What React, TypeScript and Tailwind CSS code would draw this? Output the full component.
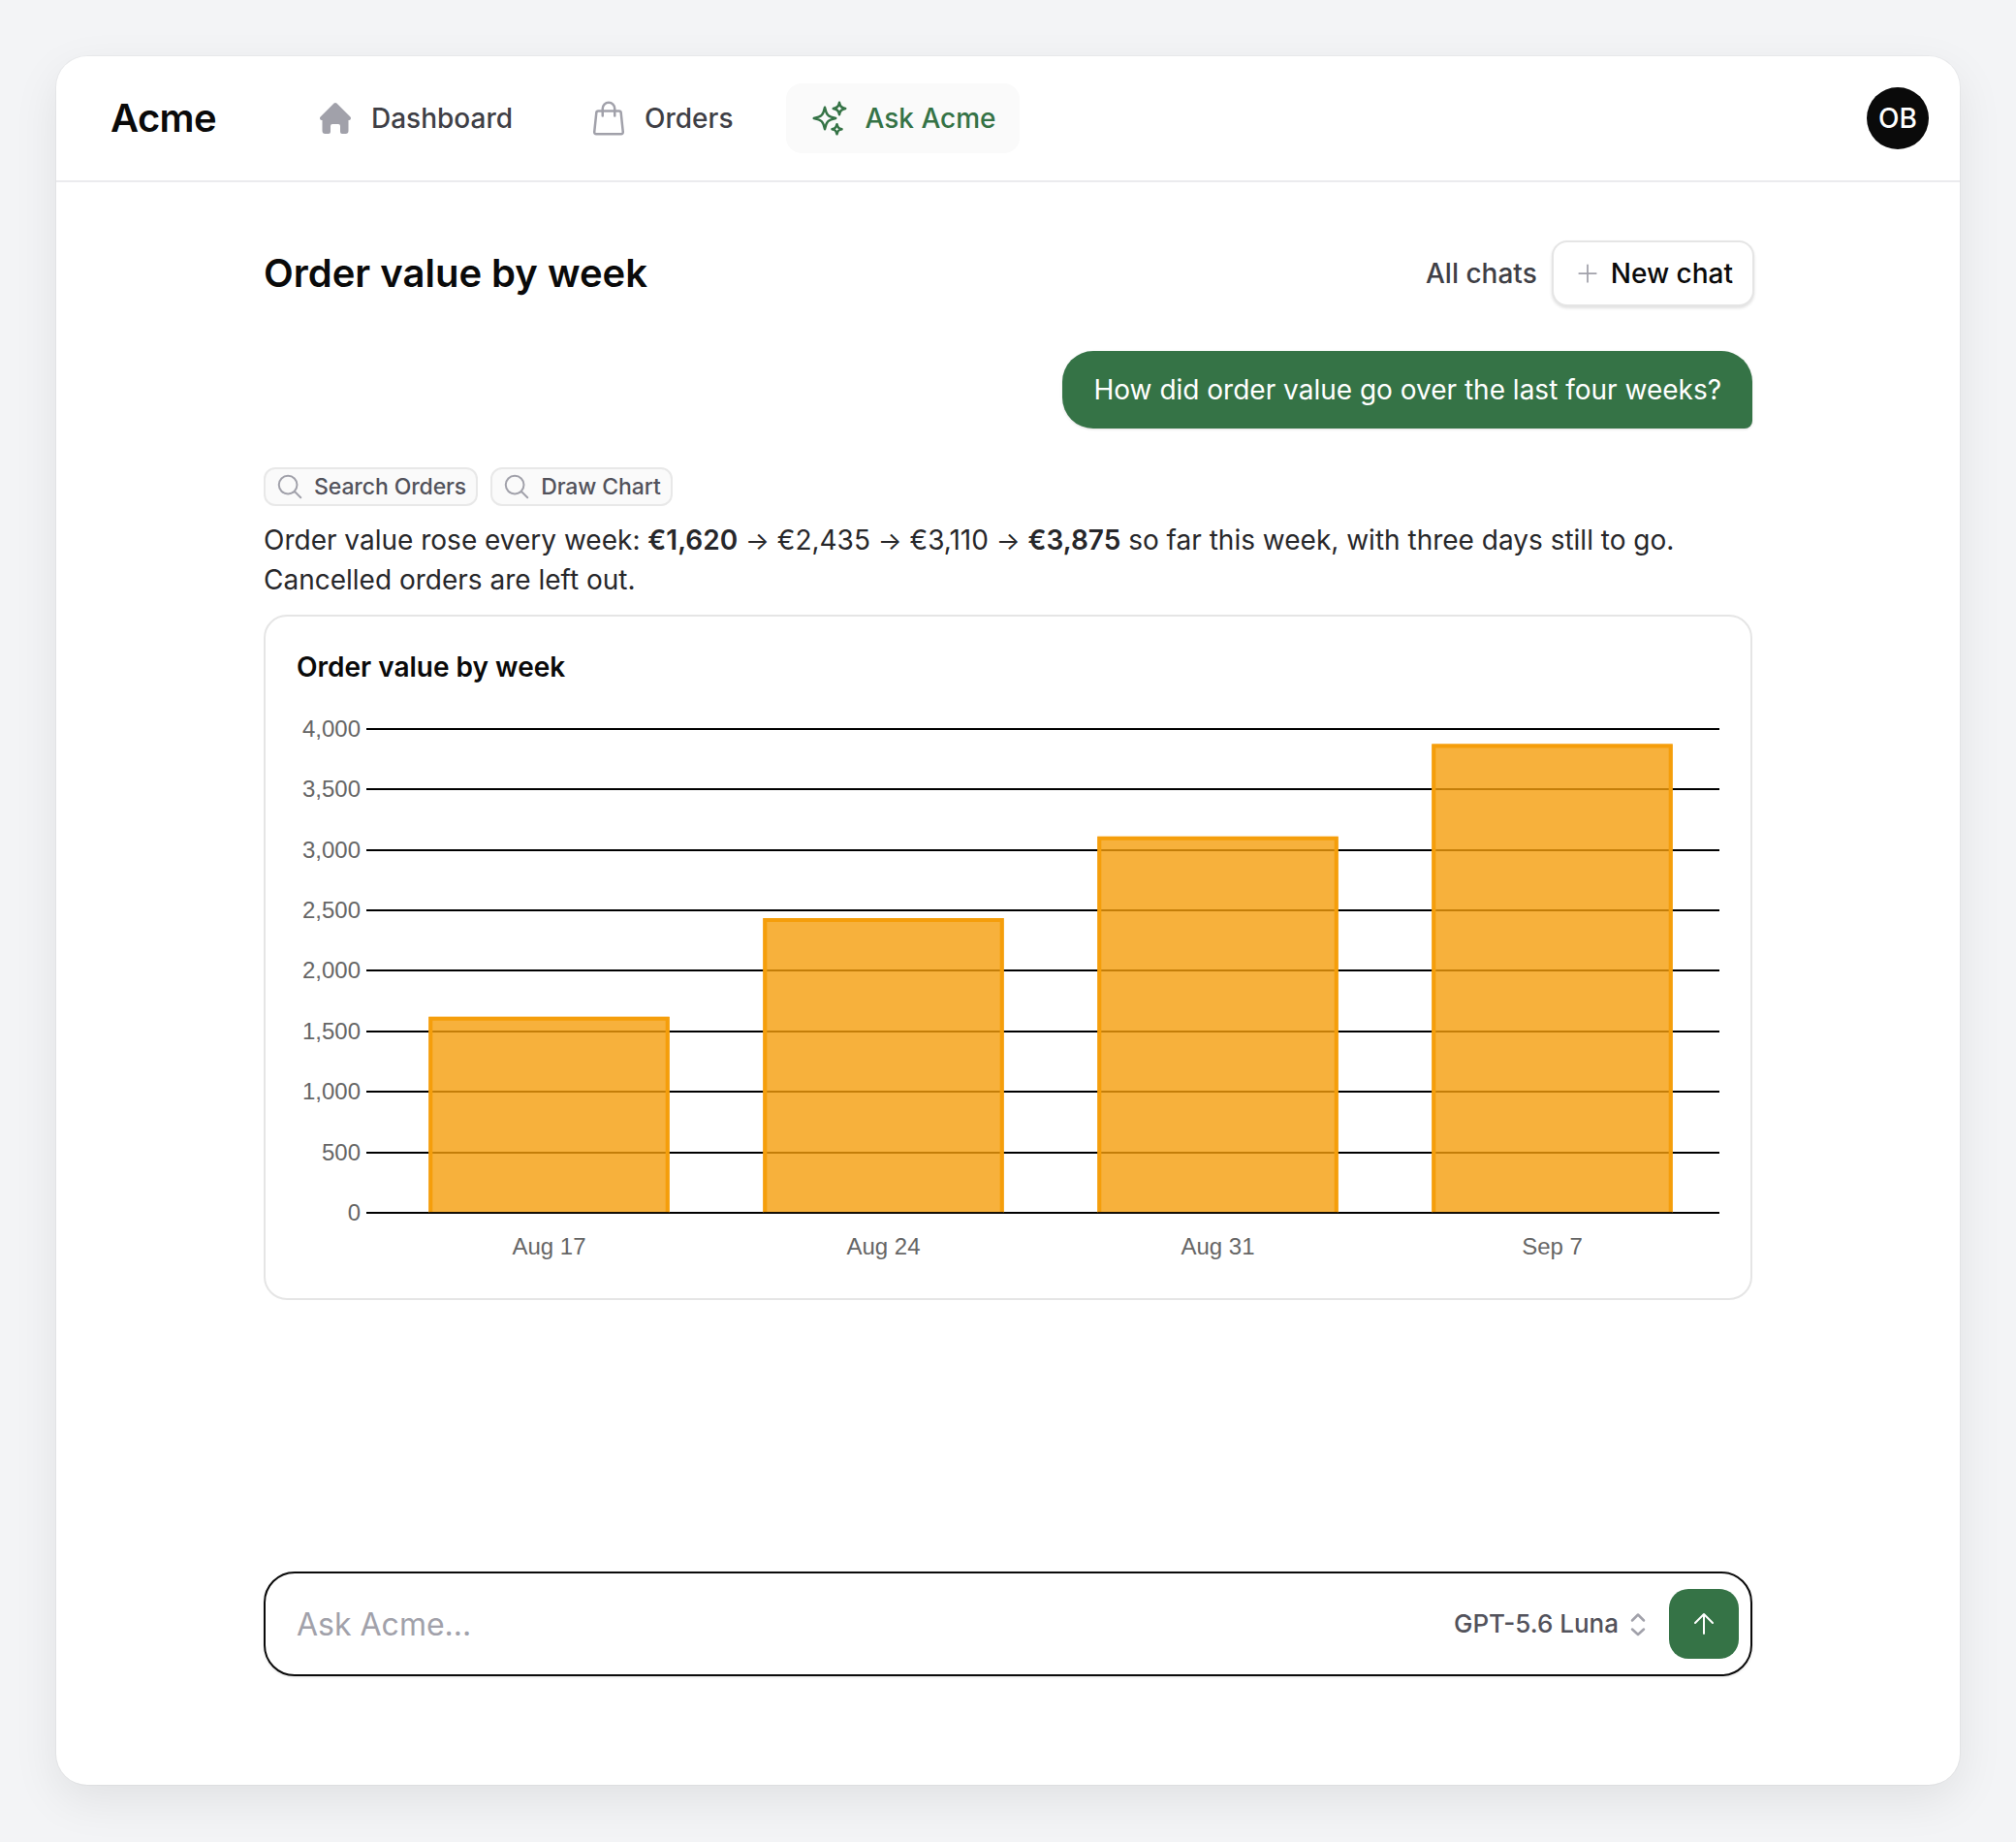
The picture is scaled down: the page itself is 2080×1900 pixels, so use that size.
import React from "react";

const GREEN = "#357346";

function HomeIcon() {
  return (
    <svg width="40" height="40" viewBox="0 0 20 20" fill="#a1a1aa" className="shrink-0">
      <path fillRule="evenodd" clipRule="evenodd" d="M9.293 2.293a1 1 0 0 1 1.414 0l7 7A1 1 0 0 1 17 11h-.25v5.5a1.5 1.5 0 0 1-1.5 1.5H13.5a1 1 0 0 1-1-1v-3a1 1 0 0 0-1-1h-3a1 1 0 0 0-1 1v3a1 1 0 0 1-1 1H4.75a1.5 1.5 0 0 1-1.5-1.5V11H3a1 1 0 0 1-.707-1.707l7-7Z" />
    </svg>
  );
}

function BagIcon() {
  return (
    <svg width="40" height="40" viewBox="0 0 24 24" fill="none" stroke="#a1a1aa" strokeWidth="1.5" strokeLinecap="round" strokeLinejoin="round" className="shrink-0">
      <path d="M15.75 10.5V6a3.75 3.75 0 1 0-7.5 0v4.5m11.356-1.993 1.263 12c.07.665-.45 1.243-1.119 1.243H4.25a1.125 1.125 0 0 1-1.12-1.243l1.264-12A1.125 1.125 0 0 1 5.513 7.5h12.974c.576 0 1.059.435 1.119 1.007Z" />
    </svg>
  );
}

function SparkIcon() {
  return (
    <svg width="40" height="40" viewBox="0 0 24 24" fill="none" stroke={GREEN} strokeWidth="1.5" strokeLinecap="round" strokeLinejoin="round" className="shrink-0">
      <path d="M9.813 15.904 9 18.75l-.813-2.846a4.5 4.5 0 0 0-3.09-3.09L2.25 12l2.846-.813a4.5 4.5 0 0 0 3.09-3.09L9 5.25l.813 2.846a4.5 4.5 0 0 0 3.09 3.09L15.75 12l-2.846.813a4.5 4.5 0 0 0-3.09 3.09ZM18.259 8.715 18 9.75l-.259-1.035a3.375 3.375 0 0 0-2.455-2.456L14.25 6l1.036-.259a3.375 3.375 0 0 0 2.455-2.456L18 2.25l.259 1.035a3.375 3.375 0 0 0 2.456 2.456L21.75 6l-1.035.259a3.375 3.375 0 0 0-2.456 2.456ZM16.894 20.567 16.5 21.75l-.394-1.183a2.25 2.25 0 0 0-1.423-1.423L13.5 18.75l1.183-.394a2.25 2.25 0 0 0 1.423-1.423l.394-1.183.394 1.183a2.25 2.25 0 0 0 1.423 1.423l1.183.394-1.183.394a2.25 2.25 0 0 0-1.423 1.423Z" />
    </svg>
  );
}

function SearchIcon() {
  return (
    <svg width="30" height="30" viewBox="0 0 24 24" fill="none" stroke="#a1a1aa" strokeWidth="1.6" strokeLinecap="round" strokeLinejoin="round" className="shrink-0">
      <path d="m21 21-5.197-5.197m0 0A7.5 7.5 0 1 0 5.196 5.196a7.5 7.5 0 0 0 10.607 10.607Z" />
    </svg>
  );
}

function Tag({ label }: { label: string }) {
  return (
    <div className="flex h-[40px] items-center gap-[10px] rounded-[12px] border-2 border-[#e8e8e8] bg-[#fafafa] pl-[10px] pr-[10px] text-[23px] leading-[32px] font-medium tracking-[-0.1px] text-[#52525b]">
      <SearchIcon />
      <span>{label}</span>
    </div>
  );
}

const vals = [
  { label: "Aug 17", v: 1620 },
  { label: "Aug 24", v: 2435 },
  { label: "Aug 31", v: 3110 },
  { label: "Sep 7", v: 3875 },
];
const ticks = [0, 500, 1000, 1500, 2000, 2500, 3000, 3500, 4000];

function Chart() {
  const left = 88;
  const right = 1468;
  const y0 = 520;
  const unit = 499.2 / 4000;
  return (
    <svg width="1484" height="580" viewBox="0 0 1484 580" className="block" style={{ fontFamily: '"Liberation Sans", Arial, sans-serif' }}>
      {ticks.map((t) => {
        const y = Math.round(y0 - t * unit);
        return (
          <g key={t}>
            <line x1={left - 16} x2={right} y1={y} y2={y} stroke="#000" strokeWidth="2" />
            <text x={left - 22} y={y + 7.5} textAnchor="end" fontSize="24" fill="#666">
              {t.toLocaleString("en-US")}
            </text>
          </g>
        );
      })}
      {vals.map((d, i) => {
        const w = 248.4;
        const cx = left + 172.5 + i * 345;
        const h = d.v * unit;
        const x = cx - w / 2;
        const top = y0 - h;
        return (
          <g key={d.label}>
            <rect x={x} y={top} width={w} height={h} fill="rgba(245,158,11,0.8)" />
            <path
              d={`M${x + 2} ${y0} V${top + 2} H${x + w - 2} V${y0}`}
              fill="none"
              stroke="#f59e0b"
              strokeWidth="4"
            />
            <line x1={x} x2={x + w} y1={y0} y2={y0} stroke="#000" strokeWidth="2" opacity="0.85" />
            <text x={cx} y={y0 + 43} textAnchor="middle" fontSize="24" fill="#666">
              {d.label}
            </text>
          </g>
        );
      })}
    </svg>
  );
}

function Arrow() {
  return <span className="text-[26px]">→</span>;
}

export default function App() {
  return (
    <div className="h-[1900px] w-[2080px] bg-[#f3f4f6] p-[58px] [font-family:Inter,'Noto_Sans',sans-serif]">
      <div className="flex h-[1783px] w-[1964px] flex-col rounded-[32px] bg-white shadow-[0_0_0_1px_rgba(0,0,0,0.03),0_16px_48px_rgba(0,0,0,0.08)]">
        <header className="flex h-[130px] shrink-0 items-center border-b-2 border-[#ebebee] pl-[56px] pr-[32px]">
          <div className="w-[188px] text-[40px] leading-[56px] font-semibold tracking-[-0.6px] text-[#0a0a0a]">Acme</div>
          <nav className="flex items-center gap-[31px] text-[28px] leading-[40px] font-medium text-[#3f3f46]">
            <div className="flex h-[72px] items-center gap-[17px] rounded-[16px] px-[24px]">
              <HomeIcon />
              Dashboard
            </div>
            <div className="flex h-[72px] items-center gap-[17px] rounded-[16px] px-[24px]">
              <BagIcon />
              Orders
            </div>
            <div className="flex h-[72px] items-center gap-[16px] rounded-[16px] bg-[#fafafa] pl-[25px] pr-[24px] text-[#357346]">
              <SparkIcon />
              Ask Acme
            </div>
          </nav>
          <div className="ml-auto flex h-[64px] w-[64px] items-center justify-center rounded-full bg-[#0a0a0a] text-[28px] font-medium text-white">OB</div>
        </header>
        <main className="mx-auto flex w-[1536px] flex-1 flex-col pt-[60px] pb-[112px]">
          <div className="flex h-[68px] items-center justify-between">
            <h1 className="text-[40px] leading-[56px] font-semibold text-[#0a0a0a]">Order value by week</h1>
            <div className="-mr-[2px] flex items-center gap-[15px]">
              <span className="text-[28px] leading-[40px] font-medium text-[#3f3f46]">All chats</span>
              <button className="flex h-[68px] items-center gap-[10px] rounded-[16px] border-2 border-[#e5e5e5] bg-white pl-[21px] pr-[20px] text-[28px] font-medium text-[#0a0a0a] shadow-[0_2px_3px_rgba(0,0,0,0.12)]">
                <svg width="28" height="28" viewBox="0 0 24 24" fill="none" stroke="#a1a1aa" strokeWidth="1.5" strokeLinecap="round"><path d="M12 4.5v15m7.5-7.5h-15" /></svg>
                New chat
              </button>
            </div>
          </div>
          <div className="mt-[46px] flex justify-end">
            <div className="rounded-[32px] rounded-br-[8px] bg-[#357346] py-[20px] pl-[33px] pr-[32px] text-[28px] leading-[40px] text-white shadow-sm">
              How did order value go over the last four weeks?
            </div>
          </div>
          <div className="mt-[40px] flex gap-[13px]">
            <Tag label="Search Orders" />
            <Tag label="Draw Chart" />
          </div>
          <p className="mt-[15px] text-[28px] leading-[40px] text-[#27272a]">
            Order value rose every week: <b className="font-semibold">€1,620</b> <Arrow /> €2,435 <Arrow /> €3,110 <Arrow /> <b className="font-semibold">€3,875</b> so far this week, with three days still to go. Cancelled orders are left out.
          </p>
          <div className="mt-[16px] h-[707px] rounded-[24px] border-2 border-[#e5e5e5] bg-white px-[32px] pt-[32px]">
            <div className="text-[28px] leading-[40px] font-semibold text-[#0a0a0a]">Order value by week</div>
            <div className="mt-[23px]">
              <Chart />
            </div>
          </div>
          <div className="mt-auto flex h-[108px] items-center rounded-[32px] border-2 border-[#0a0a0a] bg-white pl-[32px] pr-[12px] shadow-sm">
            <span className="flex-1 pt-[2px] text-[32px] text-[#a1a1aa]">Ask Acme...</span>
            <span className="pb-[2px] text-[26px] font-medium text-[#52525b]">GPT-5.6 Luna</span>
            <svg width="24" height="32" viewBox="0 0 24 32" fill="none" stroke="#a1a1aa" strokeWidth="2.5" strokeLinecap="round" strokeLinejoin="round" className="ml-[8px] mr-[20px]">
              <path d="M6 12.5l6-6 6 6M6 21.5l6 5.5 6-5.5" />
            </svg>
            <div className="flex h-[72px] w-[72px] items-center justify-center rounded-[20px] bg-[#357346]">
              <svg width="32" height="32" viewBox="0 0 24 24" fill="none" stroke="#fff" strokeWidth="1.5" strokeLinecap="round" strokeLinejoin="round"><path d="M12 19.5v-15m0 0-6.75 6.75M12 4.5l6.75 6.75" /></svg>
            </div>
          </div>
        </main>
      </div>
    </div>
  );
}
